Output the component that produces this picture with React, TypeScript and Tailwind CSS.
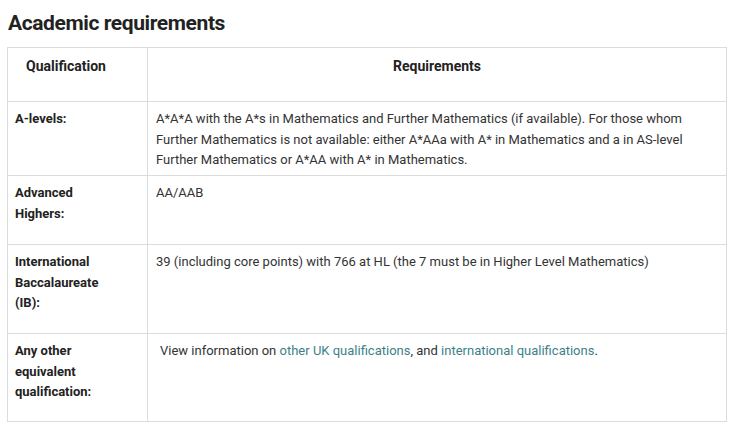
import React from "react";

const rows: { label: string[]; h: number; content: React.ReactNode }[] = [
  {
    label: ["A-levels:"],
    h: 74,
    content: (
      <span>
        A*A*A with the A*s in Mathematics and Further Mathematics (if available). For those whom Further Mathematics is not available: either A*AAa with A* in Mathematics and a in AS-level Further Mathematics or A*AA with A* in Mathematics.
      </span>
    ),
  },
  { label: ["Advanced", "Highers:"], h: 69, content: <span>AA/AAB</span> },
  {
    label: ["International", "Baccalaureate", "(IB):"],
    h: 89,
    content: <span>39 (including core points) with 766 at HL (the 7 must be in Higher Level Mathematics)</span>,
  },
  {
    label: ["Any other", "equivalent", "qualification:"],
    h: 88,
    content: (
      <span className="pl-[4px]">
        View information on <span className="text-[#3d7f88]">other UK qualifications</span>, and{" "}
        <span className="text-[#3d7f88]">international qualifications</span>.
      </span>
    ),
  },
];

export default function App() {
  return (
    <div className="w-[735px] h-[428px] bg-white text-[#333]" style={{ fontFamily: "Roboto, 'Liberation Sans', sans-serif" }}>
      <div className="h-[47px] flex items-center pl-[8px] pt-[1px]">
        <h1 className="text-[21px] font-bold text-[#222] tracking-[-0.4px]">Academic requirements</h1>
      </div>
      <div className="ml-[7px] w-[720px] border border-[#dcdcdc]">
        <div className="grid grid-cols-[140px_1fr] h-[53px]">
          <div className="border-r border-[#dcdcdc] pl-[18px] pt-[8px] text-[14px] font-bold leading-[20px] text-[#222]">Qualification</div>
          <div className="pt-[8px] text-center text-[14px] font-bold leading-[20px] text-[#222]">Requirements</div>
        </div>
        {rows.map((r, i) => (
          <div key={i} className="grid grid-cols-[140px_1fr] border-t border-[#dcdcdc]" style={{ height: r.h }}>
            <div className="border-r border-[#dcdcdc] pl-[7px] pt-[7px] text-[13px] font-bold leading-[20.6px] text-[#222]">
              {r.label.map((l, j) => (
                <div key={j}>{l}</div>
              ))}
            </div>
            <div className="pl-[8px] pr-[20px] pt-[7px] text-[13px] leading-[20.6px]">{r.content}</div>
          </div>
        ))}
      </div>
    </div>
  );
}
